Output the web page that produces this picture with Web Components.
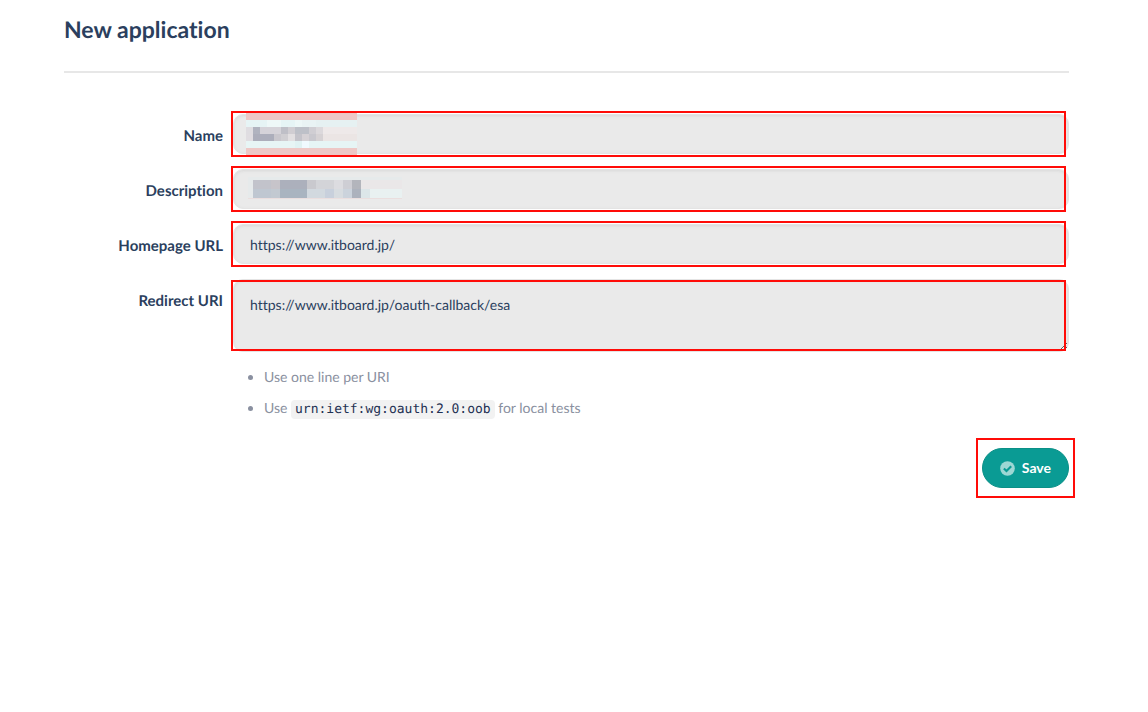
<!DOCTYPE html>
<html lang="en">
<head>
<meta charset="utf-8">
<title>New application</title>
<style>
  body {
    margin: 0;
    background: #fff;
    color: #2b3f5e;
    font: 14px/24px Lato, "Liberation Sans", sans-serif;
    font-variant-ligatures: none;
    text-rendering: geometricPrecision;
  }
</style>
</head>
<body>
<application-page></application-page>

<script>
const mosaics = {
  name: {
    left: 13, top: -1, cell: 7, width: 111, height: 42,
    rows: [
      ["#edc8c6 16"],
      ["#e6f4f5 3", "#eef8f8 2", "#e6f4f5 2", "#edf7f7 1", "#e9f3f4 2", "#e6f1f2 6"],
      ["#dfdde1 1", "#b0b3bf 1", "#d5d3d9 3", "#bfbfc7 1", "#d0cdd2 1", "#bdc0c8 2", "#d0ced3 1", "#dcd9dc 1", "#eee9e9 5"],
      ["#e0dde1 1", "#acaebb 3", "#c9c7cd 1", "#d0ced2 1", "#e2dfe1 1", "#c4c3ca 1", "#d5d1d5 1", "#c9c8ce 1", "#d6d2d4 1", "#ebe5e4 5"],
      ["#e7f5f5 7", "#e0f2f3 1", "#f0faff 1", "#e6f5f5 7"],
      ["#edc8c6 16"]
    ]
  },
  description: {
    left: 15, top: 8, cell: 9, width: 149, height: 18,
    edge: "padding: 3px 0 0 5px; border-bottom: 1px solid #eadede; background: #e6eaeb;",
    rows: [
      ["#c2c3cb 2", "#c7c4ca 1", "#acb0bc 3", "#c9c9ce 1", "#d3d4d8 2", "#dcdce0 1", "#ceced4 1", "#b3b5bc 1", "#eae7e8 5"],
      ["#bfc7d1 2", "#c2c9d1 1", "#a9b4c0 3", "#d2d9df 2", "#c8d0dc 1", "#d7dce0 1", "#cbd3dc 1", "#acb2bd 1", "#dce6e9 1", "#e9f1f1 4"]
    ]
  }
};

class MosaicPatch extends HTMLElement {
  constructor() {
    super();
    this.attachShadow({ mode: "open" });
  }

  connectedCallback() {
    const { left, top, cell, width, height, rows, edge = "" } = mosaics[this.getAttribute("pattern")];
    let rects = "";
    rows.forEach((row, y) => {
      let x = 0;
      row.forEach((run) => {
        const [color, count] = run.split(" ");
        rects += `<rect x="${x * cell}" y="${y * cell}" width="${count * cell}" height="${cell}" fill="${color}"/>`;
        x += Number(count);
      });
    });
    this.shadowRoot.innerHTML = `
      <style>
        :host {
          position: absolute;
          left: ${left}px;
          top: ${top}px;
          pointer-events: none;
        }

        svg {
          display: block;
          ${edge}
        }
      </style>
      <svg width="${width}" height="${height}" shape-rendering="crispEdges" aria-hidden="true">${rects}</svg>`;
  }
}

customElements.define("mosaic-patch", MosaicPatch);

class FormFieldComponent extends HTMLElement {
  constructor() {
    super();
    this._shadow = this.attachShadow({ mode: "open" });
  }

  connectedCallback() {
    this._shadow.append(this.template.content.cloneNode(true));
  }

  get styleTemplate() {
    return `
      :host {
        display: flex;
        gap: 10px;
      }

      label {
        flex: 0 0 159px;
        padding-top: 10px;
        text-align: right;
        font-size: 15px;
        font-weight: 700;
      }

      .control {
        position: relative;
        flex: 1;
        min-width: 0;
      }

      input,
      textarea {
        display: block;
        box-sizing: border-box;
        width: 100%;
        height: 40px;
        margin: 0;
        padding: 0 16px;
        border: 1px solid #e4e4e4;
        border-radius: 10px;
        outline: 0;
        background: #eaeaea;
        box-shadow: inset 0 1px 3px #d8d8d8;
        color: inherit;
        font: inherit;
        font-variant-ligatures: none;
        text-rendering: inherit;
      }

      textarea {
        height: 73px;
        padding: 13px 16px;
        resize: vertical;
      }

      .control::after {
        content: "";
        position: absolute;
        inset: -3px 3px -3px -2px;
        border: 2px solid #ff0c08;
        pointer-events: none;
      }

      :host([multiline]) .control::after {
        inset: 1px 3px 1px -2px;
      }
    `;
  }

  get template() {
    const value = this.getAttribute("value") || "";
    const control = this.hasAttribute("multiline")
      ? `<textarea id="field">${value}</textarea>`
      : `<input id="field" type="text" value="${value}">`;
    const template = document.createElement("template");
    template.innerHTML = `
      <style>${this.styleTemplate}</style>
      <label for="field">${this.getAttribute("label")}</label>
      <div class="control">${control}<slot></slot></div>`;
    return template;
  }
}

customElements.define("form-field", FormFieldComponent);

class SaveButtonComponent extends HTMLElement {
  constructor() {
    super();
    this.attachShadow({ mode: "open" }).innerHTML = `
      <style>
        :host {
          display: block;
          position: relative;
        }

        :host::after {
          content: "";
          position: absolute;
          inset: -10px -6px;
          border: 2px solid #ff0c08;
          pointer-events: none;
        }

        button {
          display: flex;
          align-items: center;
          gap: 7px;
          height: 40px;
          padding: 0 17px;
          border: 1px solid #0a9087;
          border-radius: 20px;
          background: #0a9b94;
          color: #fff;
          font: inherit;
          font-weight: 700;
          cursor: pointer;
        }
      </style>
      <button type="submit">
        <svg width="15" height="15" viewBox="0 0 15 15" aria-hidden="true">
          <circle cx="7.5" cy="7.5" r="7.3" fill="#9dd7d4"/>
          <path d="M3.9 7.4l2.6 2.6 4.7-4.7" fill="none" stroke="#0a9b94" stroke-width="2.1"/>
        </svg>
        <slot></slot>
      </button>`;
  }
}

customElements.define("save-button", SaveButtonComponent);

class ApplicationPageComponent extends HTMLElement {
  constructor() {
    super();
    this._shadow = this.attachShadow({ mode: "open" });
    this._shadow.append(this.template.content.cloneNode(true));
  }

  get styleTemplate() {
    return `
      :host {
        display: block;
        padding: 13px 79px 40px 64px;
      }

      h1 {
        margin: 0;
        padding-bottom: 26px;
        border-bottom: 2px solid #e7e7e7;
        font-size: 23px;
        line-height: 32px;
      }

      form {
        display: flex;
        flex-direction: column;
        gap: 15px;
        padding-top: 41px;
      }

      .hints {
        margin: -6px 0 0 186px;
        padding: 0 0 0 14px;
        color: #8a90a0;
      }

      .hints li {
        line-height: 31px;
      }

      code {
        padding: 2px 4px;
        border-radius: 4px;
        background: #f2f2f2;
        color: #1f3153;
        font: 13px "DejaVu Sans Mono", monospace;
      }

      .actions {
        display: flex;
        justify-content: flex-end;
        padding-top: 10px;
      }
    `;
  }

  get template() {
    const template = document.createElement("template");
    template.innerHTML = `
      <style>${this.styleTemplate}</style>
      <h1>New application</h1>
      <form>
        <form-field label="Name"><mosaic-patch pattern="name"></mosaic-patch></form-field>
        <form-field label="Description"><mosaic-patch pattern="description"></mosaic-patch></form-field>
        <form-field label="Homepage URL" value="https://www.itboard.jp/"></form-field>
        <form-field label="Redirect URI" value="https://www.itboard.jp/oauth-callback/esa" multiline></form-field>
        <ul class="hints">
          <li>Use one line per URI</li>
          <li>Use <code>urn:ietf:wg:oauth:2.0:oob</code> for local tests</li>
        </ul>
        <div class="actions"><save-button>Save</save-button></div>
      </form>`;
    return template;
  }
}

customElements.define("application-page", ApplicationPageComponent);
</script>
</body>
</html>
